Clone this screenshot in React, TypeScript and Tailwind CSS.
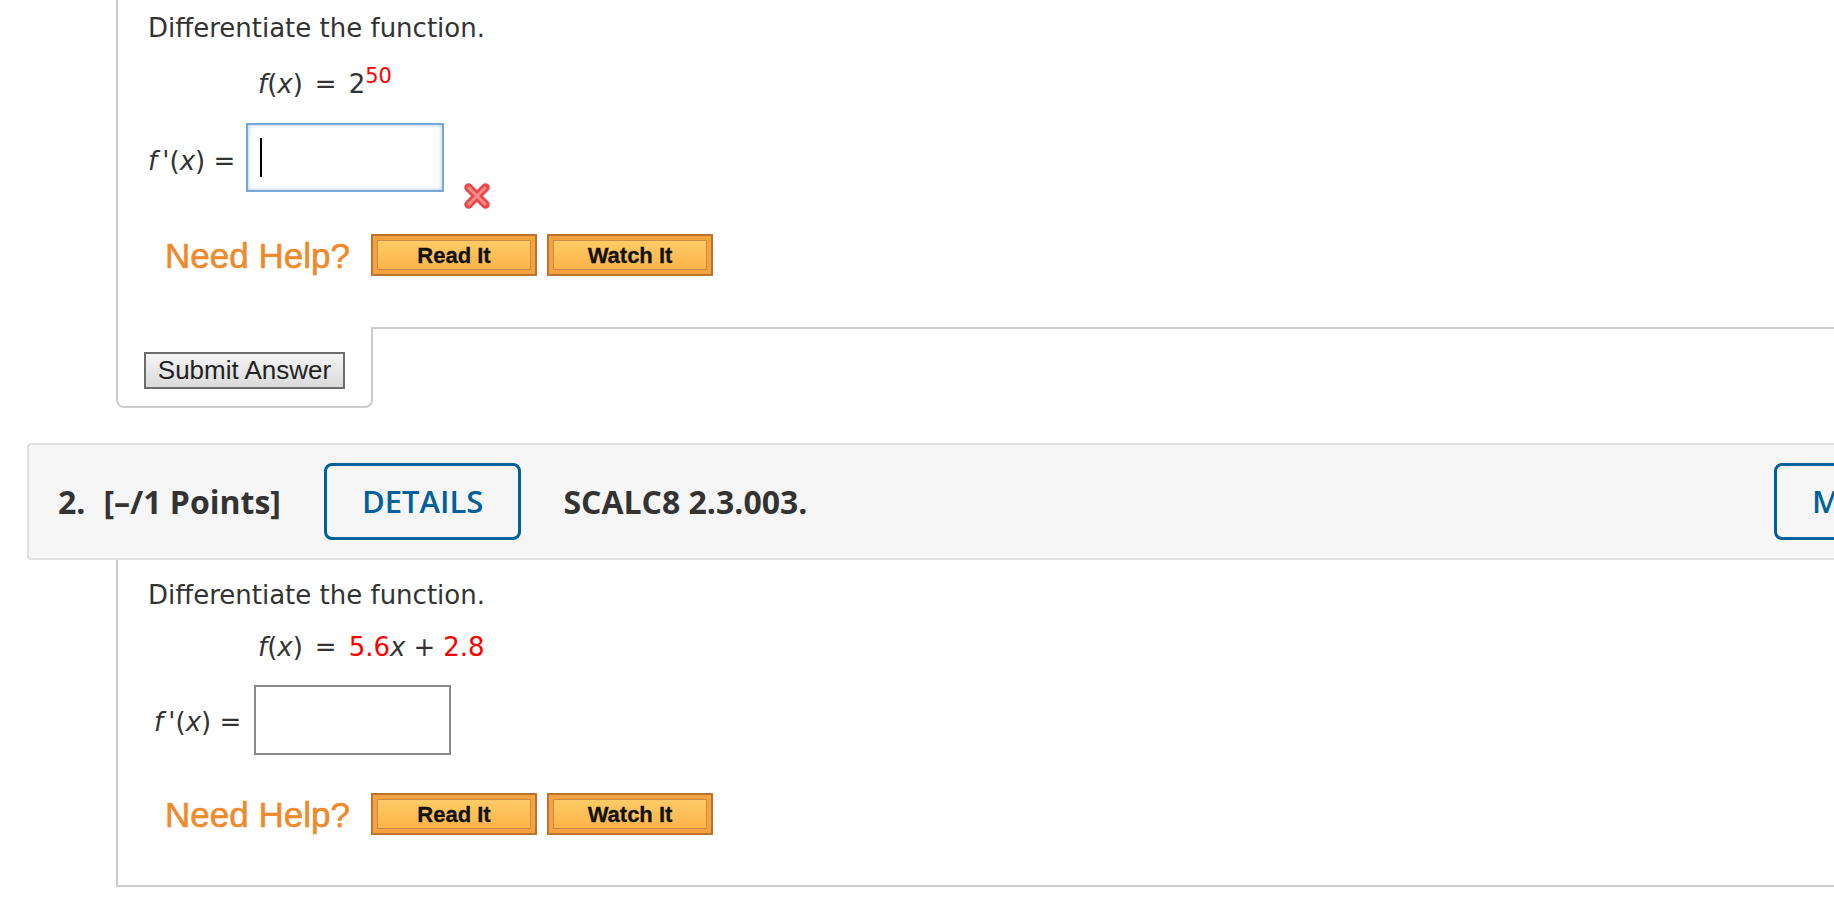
import React from 'react';

const arial = "font-['Liberation_Sans',Arial,sans-serif]";
const openSans = "font-['Open_Sans',sans-serif]";

const RedX = () => (
  <svg width="30" height="30" viewBox="0 0 30 30" className="ml-[18px] mt-[58px] shrink-0">
    <path d="M6.5 6.5 L23.5 23.5 M23.5 6.5 L6.5 23.5" stroke="#e8494a" strokeWidth="8.5" strokeLinecap="round" />
    <path d="M7 7 L23 23 M23 7 L7 23" stroke="#f98c8b" strokeWidth="3" strokeLinecap="round" />
  </svg>
);

const HelpButton = ({ label }: { label: string }) => (
  <div className="w-[166px] h-[42px] border-2 border-[#bb7430] bg-[#f5a23f] p-[4px]">
    <div className="h-full border border-[#c88b4c] bg-gradient-to-b from-[#ffcb66] to-[#fcb449] flex items-center justify-center">
      <span className={`${arial} text-[22px] font-bold text-[#111] [-webkit-text-stroke:0.3px_#111]`}>{label}</span>
    </div>
  </div>
);

const NeedHelp = () => (
  <div className="flex items-center">
    <span
      className={`${arial} ml-[17px] w-[206px] text-[35px] leading-none text-[#ee8a2c] [-webkit-text-stroke:0.6px_#ee8a2c]`}
    >
      Need Help?
    </span>
    <HelpButton label="Read It" />
    <div className="ml-[10px]">
      <HelpButton label="Watch It" />
    </div>
  </div>
);

const Prime = () => (
  <>
    <i>f</i>&thinsp;'(<i>x</i>) =
  </>
);

export default function App() {
  return (
    <div className="w-full h-[914px] overflow-hidden bg-white text-[#333] font-['DejaVu_Sans',Verdana,sans-serif] text-[26px]">
      {/* question 1, bottom part */}
      <div className="ml-[116px]">
        <div className="border-l-2 border-[#cccccc] pl-[30px] pt-[13px] pb-[51px]">
          <p className="leading-[30px]">Differentiate the function.</p>
          <p className="mt-[26px] ml-[110px] leading-[30px]">
            <i>f</i>(<i>x</i>)<span className="mx-[12px]">=</span>2
            <sup className="text-[21px] text-[#ff0000]">50</sup>
          </p>
          <div className="mt-[24px] flex items-start">
            <span className="mt-[23px] w-[98px] leading-[30px] shrink-0">
              <Prime />
            </span>
            <div className="w-[198px] h-[69px] border-2 border-[#78a6d8] shadow-[inset_0_0_4px_rgba(110,160,215,0.6)] flex items-center bg-white">
              <span className="ml-[12px] w-[2px] h-[39px] bg-black" />
            </div>
            <RedX />
          </div>
          <div className="mt-[23px]">
            <NeedHelp />
          </div>
        </div>
        <div className="flex">
          <div className="w-[257px] border-l-2 border-r-2 border-b-2 border-[#cccccc] rounded-b-[8px] pl-[26px] pt-[24px] pb-[16px]">
            <button
              className={`${arial} w-[201px] h-[37px] border-2 border-[#6d6d6d] bg-gradient-to-b from-[#f5f5f5] to-[#dadada] text-[26px] leading-none text-[#222]`}
            >
              Submit Answer
            </button>
          </div>
          <div className="flex-1 border-t-2 border-[#cccccc]" />
        </div>
      </div>

      {/* question 2 header */}
      <div
        className={`${openSans} mt-[35px] ml-[27px] w-[2007px] h-[117px] border-2 border-r-0 border-[#e0e0e0] rounded-l-[4px] bg-[#f6f6f6] flex items-center pl-[29px] pr-[28px]`}
      >
        <div className="w-[266px] text-[32px] font-bold text-[#333]">
          2.<span className="ml-[18px]">[–/1 Points]</span>
        </div>
        <div className="h-[77px] border-[3px] border-[#00609a] rounded-[8px] px-[35px] flex items-center text-[31px] font-semibold text-[#00609a]">
          DETAILS
        </div>
        <div className="ml-[42px] flex-1 text-[32px] font-bold text-[#333]">SCALC8 2.3.003.</div>
        <div className="w-[232px] h-[77px] border-[3px] border-[#00609a] rounded-[8px] px-[35px] flex items-center text-[31px] font-semibold text-[#00609a] whitespace-nowrap">
          MY NOTES
        </div>
      </div>

      {/* question 2 body */}
      <div className="ml-[116px] border-l-2 border-b-2 border-[#cccccc] pl-[30px] pt-[20px] pb-[50px]">
        <p className="leading-[30px]">Differentiate the function.</p>
        <p className="mt-[22px] ml-[110px] leading-[30px]">
          <i>f</i>(<i>x</i>)<span className="mx-[12px]">=</span>
          <span className="text-[#ff0000]">5.6</span>
          <i>x</i>
          <span className="mx-[8px]">+</span>
          <span className="text-[#ff0000]">2.8</span>
        </p>
        <div className="mt-[23px] flex items-start">
          <span className="ml-[6px] mt-[22px] w-[100px] leading-[30px] shrink-0">
            <Prime />
          </span>
          <div className="w-[197px] h-[70px] border-2 border-[#8a8a8a] bg-white" />
        </div>
        <div className="mt-[38px]">
          <NeedHelp />
        </div>
      </div>
    </div>
  );
}
